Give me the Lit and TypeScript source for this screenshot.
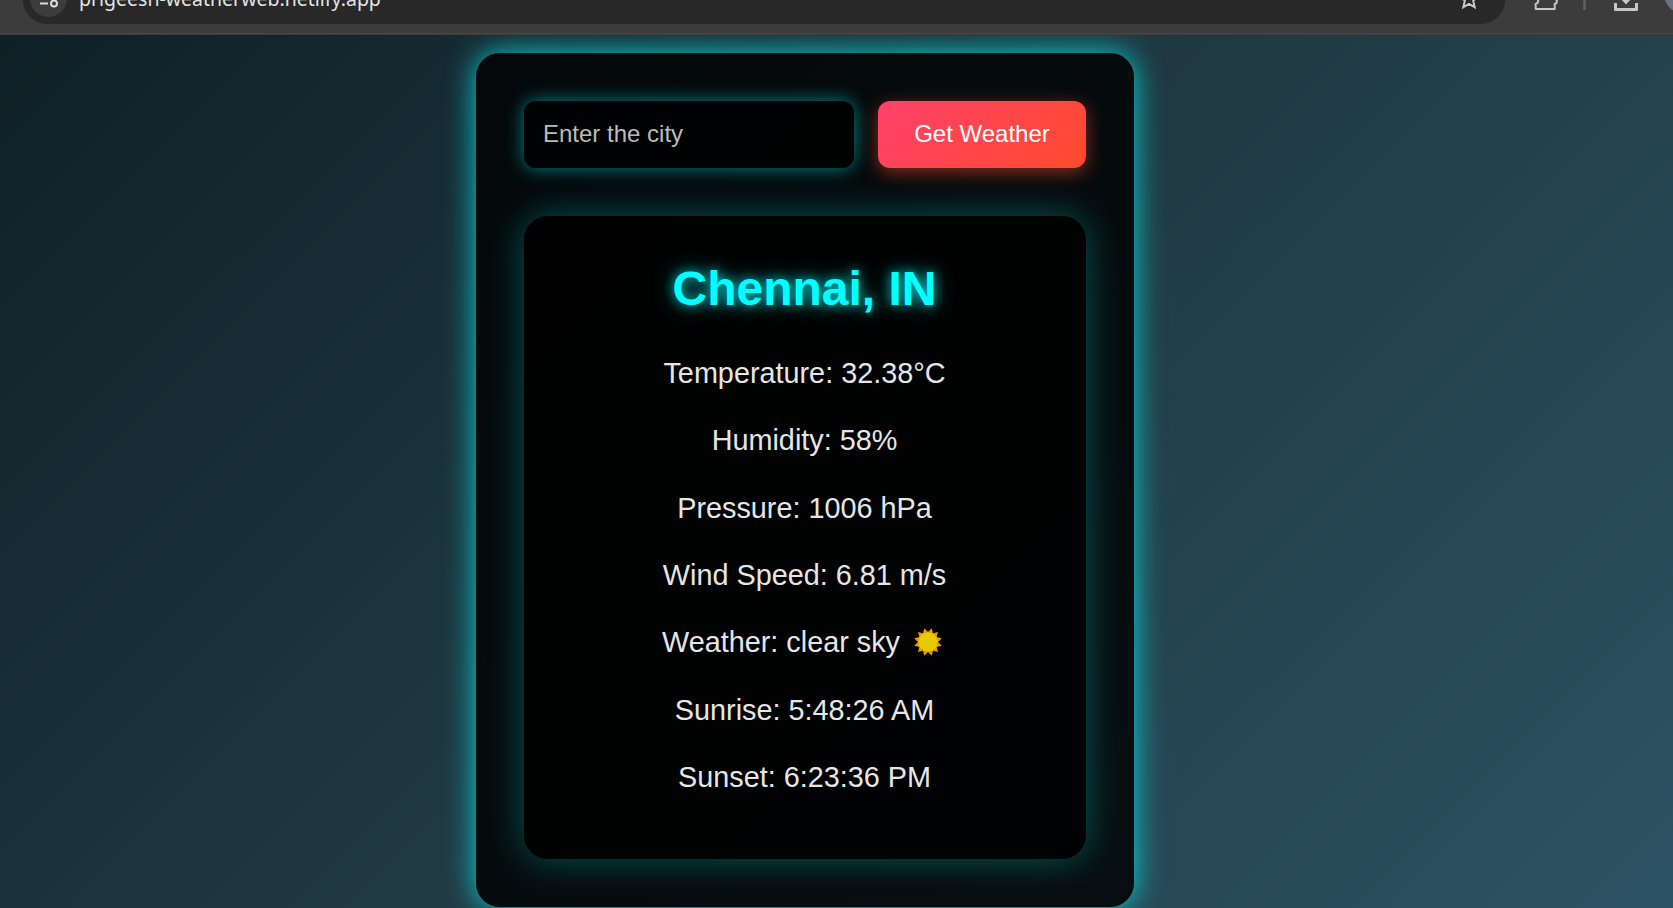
import { LitElement, html, css } from "lit";
import { customElement } from "lit/decorators.js";

const rows = [
  "Temperature: 32.38°C",
  "Humidity: 58%",
  "Pressure: 1006 hPa",
  "Wind Speed: 6.81 m/s",
  "Weather: clear sky",
  "Sunrise: 5:48:26 AM",
  "Sunset: 6:23:36 PM",
];

const rays = Array.from({ length: 24 }, (_, i) => {
  const a = ((i + 1) * Math.PI) / 12;
  const r = i % 2 ? 10 : 14.3;
  return `${(14 + r * Math.cos(a)).toFixed(2)},${(14 + r * Math.sin(a)).toFixed(2)}`;
}).join(" ");

const sun = html`<svg class="sun" width="28" height="28" viewBox="0 0 28 28">
  <polygon points=${rays} fill="#e69c00" />
  <circle cx="14" cy="14" r="9.500" fill="#e6cb00" />
</svg>`;

@customElement("browser-bar")
export class BrowserBar extends LitElement {
  static styles = css`
    :host { display: block; height: 35px; overflow: hidden; background: #3c3c3c; box-shadow: inset 0 -1px #3c3c3c, inset 0 -2px #4b4744; flex: none; }
    .bar { display: flex; align-items: flex-end; height: 34px; }
    .address { display: flex; align-items: center; box-sizing: border-box; width: 1482px; height: 48px; margin: 0 0 10px 23px; padding-left: 7px; border-radius: 24px; background: #282828; flex: none; }
    .chip { width: 37px; height: 37px; border-radius: 50%; background: #3c3c3c; flex: none; margin-bottom: 4px; }
    .url { margin-left: 12px; flex: 1; font: 19.500px/28px "Noto Sans", sans-serif; color: #e3e3e3; margin-bottom: 3px; }
    .star { margin: 0 24px 3px 0; }
    .tools { display: flex; flex: 1; height: 34px; }
    svg { display: block; }
  `;
  render() {
    return html`<div class="bar">
      <div class="address">
        <svg class="chip" viewBox="0 0 37 37">
          <g fill="none" stroke="#dcdcdc" stroke-width="2"><path d="M10 23.600h8" /><circle cx="24" cy="23.600" r="3" /><circle cx="13" cy="14" r="3" /><path d="M19 14h8" /></g>
        </svg>
        <div class="url">prigeesh-weatherweb.netlify.app</div>
        <svg class="star" width="24" height="24" viewBox="0 0 24 24"><path d="M12 2.600l2.600 6.100 6.600.6-5 4.400 1.500 6.500L12 16.800l-5.700 3.400 1.500-6.500-5-4.400 6.600-.6z" fill="none" stroke="#c7c7c7" stroke-width="2" /></svg>
      </div>
      <svg class="tools" width="168" height="34" viewBox="1505 0 168 34">
        <path d="M1536 -4v2.500c3 1 3 4.500-.3 5.500v5h19v-5c3-1 3-4.500-.3-5.500V-4" fill="none" stroke="#c7c7c7" stroke-width="2" stroke-linejoin="round" />
        <path d="M1584.500 0v10" stroke="#606060" stroke-width="2.500" />
        <path d="M1615.500 3v6.500h21V3" fill="none" stroke="#c7c7c7" stroke-width="3" stroke-linejoin="round" />
        <path d="M1620 -2h12l-6 6.500z" fill="#c7c7c7" />
        <circle cx="1683" cy="-6" r="19" fill="#6b7280" />
      </svg>
    </div>`;
  }
}

@customElement("app-root")
export class AppRoot extends LitElement {
  static styles = css`
    :host { display: flex; flex-direction: column; height: 908px; overflow: hidden; font-family: "Liberation Sans", Arial, sans-serif; color: #fff; }
    .page { flex: 1; min-height: 0; overflow: hidden; display: flex; align-items: flex-start; padding: 18px 0 0 476px; background: linear-gradient(135deg, #0f2027, #203a43, #2c5364); }
    .card { box-sizing: border-box; width: 658px; height: 854px; padding: 48px; border-radius: 24px; background: rgba(0, 0, 0, 0.8); box-shadow: 0 0 30px rgba(0, 255, 255, 0.8); flex: none; }
    .search { display: flex; gap: 24px; height: 67px; }
    .city { box-sizing: border-box; width: 330px; padding: 0 19px 2px; border: 0; border-radius: 12px; outline: 0; background: rgba(0, 0, 0, 0.7); box-shadow: 0 0 18px rgba(0, 255, 255, 0.5); color: #fff; font: 24px "Liberation Sans", Arial, sans-serif; }
    .city::placeholder { color: #bbb; opacity: 1; }
    .go { flex: 1; padding: 0 0 2px; border: 0; border-radius: 12px; background: linear-gradient(135deg, #ff416c, #ff4b2b); box-shadow: 0 4.800px 18px rgba(255, 75, 43, 0.5); color: #fff; font: 24px "Liberation Sans", Arial, sans-serif; }
    .result { box-sizing: border-box; height: 643px; margin-top: 48px; padding: 45px 24px 0; border-radius: 24px; background: rgba(0, 0, 0, 0.8); box-shadow: 0 0 36px rgba(0, 255, 255, 0.3); text-align: center; }
    .place { margin: 0 1px 0 0; font-size: 48px; line-height: 56px; font-weight: bold; color: #0ff; text-shadow: 0 0 12px rgba(0, 255, 255, 0.8), 0 0 24px rgba(0, 255, 255, 0.4); }
    .rows { display: flex; flex-direction: column; margin: 23px 1px 0 0; }
    .row { display: flex; align-items: center; justify-content: center; height: 67.300px; font-size: 28.800px; color: #e6e6e6; white-space: pre; }
    .sun { display: block; margin: 0 5px 2px 14px; }
  `;
  render() {
    return html`<browser-bar></browser-bar>
      <main class="page">
        <section class="card">
          <div class="search">
            <input class="city" placeholder="Enter the city" />
            <button class="go">Get Weather</button>
          </div>
          <div class="result">
            <h1 class="place">Chennai, IN</h1>
            <div class="rows">
              ${rows.map((r) => html`<div class="row">${r}${r.startsWith("Weather") ? sun : ""}</div>`)}
            </div>
          </div>
        </section>
      </main>`;
  }
}
